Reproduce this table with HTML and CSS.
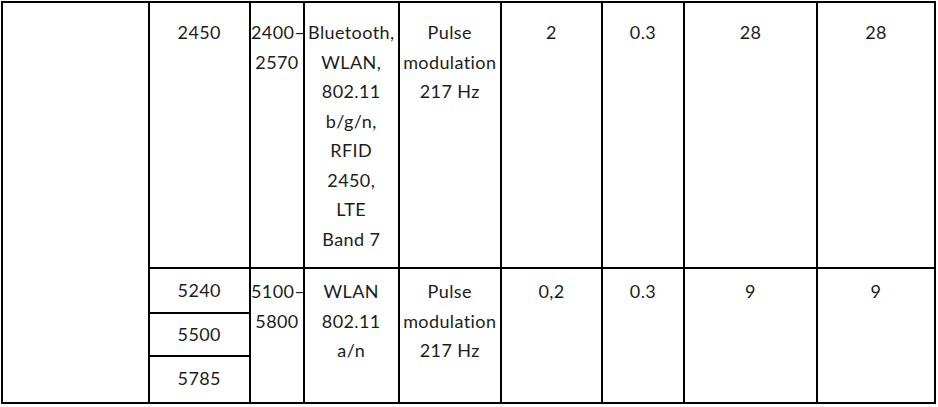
FILE: index.html
```html
<!DOCTYPE html>
<html>
<head>
<meta charset="utf-8">
<link rel="stylesheet" href="styles.css">
</head>
<body>
<table class="grid">
  <colgroup>
    <col class="c1"><col class="c2"><col class="c3"><col class="c4"><col class="c5"><col class="c6"><col class="c7"><col class="c8"><col class="c9">
  </colgroup>
  <tr class="row-a">
    <td class="blank" rowspan="4"></td>
    <td>2450</td>
    <td>2400–<br>2570</td>
    <td>Bluetooth,<br>WLAN,<br>802.11<br>b/g/n,<br>RFID<br>2450,<br>LTE<br>Band 7</td>
    <td>Pulse<br>modulation<br>217 Hz</td>
    <td>2</td>
    <td>0.3</td>
    <td>28</td>
    <td>28</td>
  </tr>
  <tr class="row-b">
    <td class="sub sub1">5240</td>
    <td rowspan="3">5100–<br>5800</td>
    <td rowspan="3">WLAN<br>802.11<br>a/n</td>
    <td rowspan="3">Pulse<br>modulation<br>217 Hz</td>
    <td rowspan="3">0,2</td>
    <td rowspan="3">0.3</td>
    <td rowspan="3">9</td>
    <td rowspan="3">9</td>
  </tr>
  <tr class="row-c">
    <td class="sub sub2">5500</td>
  </tr>
  <tr class="row-d">
    <td class="sub sub3">5785</td>
  </tr>
</table>
</body>
</html>
```

FILE: styles.css
```css
html, body {
  margin: 0;
  padding: 0;
  background: #ffffff;
}

body {
  font-family: "Lato", "Liberation Sans", sans-serif;
  font-size: 18px;
  letter-spacing: 0.4px;
  color: #1c1c1c;
}

.grid {
  margin: 1px 0 0 1px;
  width: 935px;
  border-collapse: collapse;
  table-layout: fixed;
  border: 2px solid #2b2b2b;
}

.grid td {
  border: 2px solid #000;
  vertical-align: top;
  text-align: center;
  line-height: 29.5px;
  padding: 8px 0 0 0;
  white-space: nowrap;
}

.c1 { width: 146.5px; }
.c2 { width: 101.5px; }
.c3 { width: 54px; }
.c4 { width: 94.5px; }
.c5 { width: 102.5px; }
.c6 { width: 101px; }
.c7 { width: 82px; }
.c8 { width: 133px; }
.c9 { width: 118px; }

.row-a td {
  height: 249px;
  padding-top: 15px;
}

.grid .blank {
  padding: 0;
}

.grid .sub {
  vertical-align: middle;
  padding: 0;
}

.row-b .sub1 { height: 43px; }
.row-c .sub2 { height: 41px; }
.row-d .sub3 { height: 43px; padding-bottom: 2px; }
```
